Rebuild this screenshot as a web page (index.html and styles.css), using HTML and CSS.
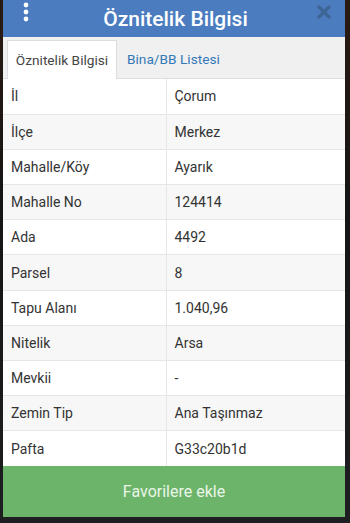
FILE: index.html
```html
<!DOCTYPE html>
<html lang="tr">
<head>
<meta charset="utf-8">
<link rel="stylesheet" href="styles.css">
</head>
<body>
<div class="modal">
  <div class="header">
    <svg class="kebab" width="8" height="20" viewBox="0 0 8 20"><circle cx="4" cy="3" r="2.4" fill="#fff"/><circle cx="4" cy="10" r="2.4" fill="#fff"/><circle cx="4" cy="17" r="2.4" fill="#fff"/></svg>
    <div class="title">Öznitelik Bilgisi</div>
    <svg class="close" width="14" height="14" viewBox="0 0 14 14"><path d="M2 2L12 12M12 2L2 12" stroke="#3d6596" stroke-width="3.2" stroke-linecap="round"/></svg>
  </div>
  <div class="tabs">
    <div class="tab active">Öznitelik Bilgisi</div>
    <div class="tab link">Bina/BB Listesi</div>
  </div>
  <table class="info">
    <tr><td>İl</td><td>Çorum</td></tr>
    <tr><td>İlçe</td><td>Merkez</td></tr>
    <tr><td>Mahalle/Köy</td><td>Ayarık</td></tr>
    <tr><td>Mahalle No</td><td>124414</td></tr>
    <tr><td>Ada</td><td>4492</td></tr>
    <tr><td>Parsel</td><td>8</td></tr>
    <tr><td>Tapu Alanı</td><td>1.040,96</td></tr>
    <tr><td>Nitelik</td><td>Arsa</td></tr>
    <tr><td>Mevkii</td><td>-</td></tr>
    <tr><td>Zemin Tip</td><td>Ana Taşınmaz</td></tr>
    <tr><td>Pafta</td><td>G33c20b1d</td></tr>
  </table>
  <div class="fav">Favorilere ekle</div>
</div>
</body>
</html>
```
FILE: styles.css
```css
html, body {
  margin: 0;
  padding: 0;
}
body {
  background: linear-gradient(180deg, #2a1a12 0%, #151515 40%, #1e1e22 100%);
  height: 523px;
  overflow: hidden;
  font-family: Roboto, "Noto Sans", sans-serif;
}
.modal {
  margin-left: 3px;
  width: 342px;
  background: #fff;
}
.header {
  height: 37px;
  background: #4a7cbf;
  display: flex;
  align-items: center;
  padding: 0 14px 0 19px;
  box-sizing: border-box;
}
.kebab {
  flex: none;
  margin-top: -14px;
}
.title {
  flex: 1;
  text-align: center;
  color: #fff;
  font-size: 21px;
  font-weight: 500;
  margin-left: 4px;
}
.close {
  flex: none;
  margin-top: -14px;
}
.tabs {
  background: #f0f0f0;
  height: 42px;
  box-sizing: border-box;
  padding: 3px 0 0 4px;
  display: flex;
  align-items: flex-end;
  border-bottom: 1px solid #dddddd;
}
.tab {
  font-size: 13.7px;
  height: 38px;
  display: flex;
  align-items: center;
  padding: 0 8px;
  box-sizing: border-box;
  white-space: nowrap;
  flex: none;
}
.tab.active {
  background: #fff;
  color: #444;
  border: 1px solid #dddddd;
  border-bottom: none;
  margin-bottom: -1px;
  height: 39px;
  width: 110px;
  padding: 0;
  justify-content: center;
}
.tab.link {
  color: #3479b7;
  padding-left: 10px;
}
.info {
  width: 100%;
  border-collapse: collapse;
  font-size: 14px;
  color: #333;
}
.info td {
  height: 35.2px;
  padding: 0 0 0 8px;
  border-top: 1px solid #e6e6e6;
  box-sizing: border-box;
}
.info tr:first-child td {
  border-top: none;
}
.info td:first-child {
  width: 163px;
  border-right: 1px solid #e6e6e6;
}
.info tr:nth-child(even) td {
  background: #f7f7f7;
}
.fav {
  height: 51px;
  background: #6cb46a;
  color: #eaf6e8;
  font-size: 16px;
  display: flex;
  align-items: center;
  justify-content: center;
}
```
